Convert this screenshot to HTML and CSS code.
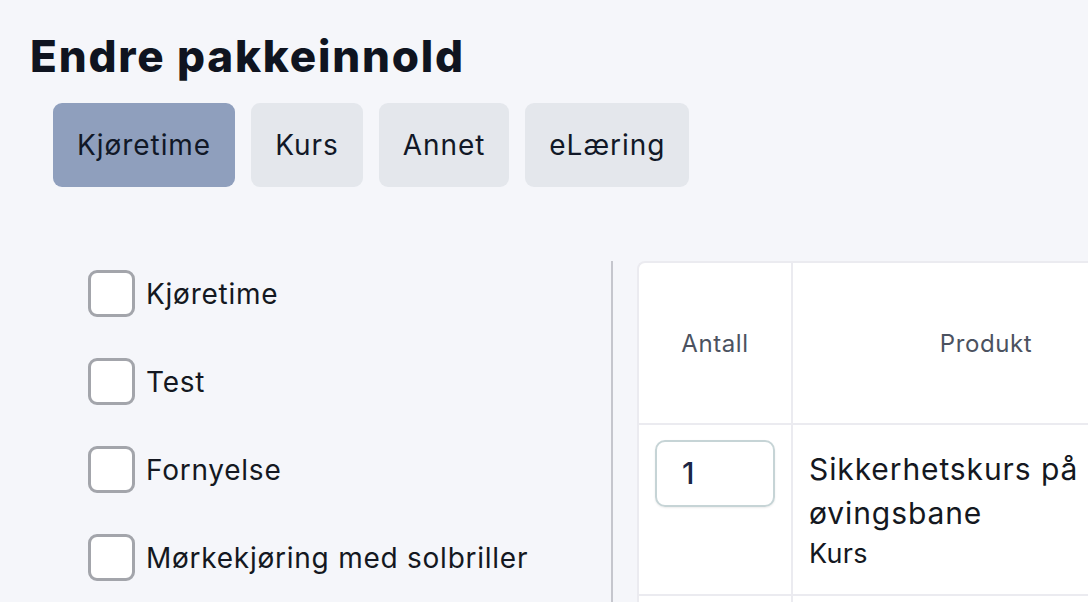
FILE: index.html
```html
<!DOCTYPE html>
<html lang="no">
<head>
<meta charset="utf-8">
<title>Endre pakkeinnold</title>
<link rel="stylesheet" href="styles.css">
</head>
<body>
<main class="page">
  <h1 class="title">Endre pakkeinnold</h1>
  <nav class="tabs">
    <button class="tab active">Kjøretime</button>
    <button class="tab">Kurs</button>
    <button class="tab">Annet</button>
    <button class="tab">eLæring</button>
  </nav>
  <section class="content">
    <div class="options">
      <label class="option"><span class="box"></span><span>Kjøretime</span></label>
      <label class="option"><span class="box"></span><span>Test</span></label>
      <label class="option"><span class="box"></span><span>Fornyelse</span></label>
      <label class="option"><span class="box"></span><span>Mørkekjøring med solbriller</span></label>
    </div>
    <div class="divider"></div>
    <div class="table-wrap">
      <table class="items">
        <thead>
          <tr><th class="col-qty">Antall</th><th class="col-prod">Produkt</th></tr>
        </thead>
        <tbody>
          <tr>
            <td class="qty-cell"><div class="qty">1</div></td>
            <td class="prod-cell"><div class="prod-name">Sikkerhetskurs på øvingsbane</div><div class="prod-type">Kurs</div></td>
          </tr>
          <tr><td class="qty-cell"></td><td class="prod-cell"></td></tr>
        </tbody>
      </table>
    </div>
  </section>
</main>
</body>
</html>
```

FILE: styles.css
```css
* { box-sizing: border-box; }
html, body { margin: 0; padding: 0; }
body {
  background: #f5f6fa;
  font-family: Inter, "Noto Sans", sans-serif;
  color: #111827;
  overflow: hidden;
  width: 1088px;
  height: 602px;
}
.page { padding: 25px 0 0 30px; height: 602px; overflow: hidden; }
.title {
  margin: 0;
  font-size: 44px;
  font-weight: 800;
  line-height: 62px;
  color: #0f1420;
  letter-spacing: 1.8px;
}
.tabs {
  display: flex;
  gap: 16px;
  margin: 16px 0 0 23px;
}
.tab {
  border: 0;
  height: 84px;
  padding: 0 24px;
  border-radius: 9px;
  background: #e4e7ec;
  font-family: inherit;
  font-size: 28px;
  letter-spacing: 0.95px;
  color: #111827;
}
.tab.active { background: #8f9fbd; }
.content {
  display: flex;
  margin-top: 74px;
}
.options {
  width: 581px;
  padding: 9px 0 0 58px;
  display: flex;
  flex-direction: column;
  gap: 41px;
}
.option {
  display: flex;
  align-items: center;
  gap: 11px;
  font-size: 28px;
  letter-spacing: 0.75px;
  color: #141821;
  height: 47px;
}
.box {
  width: 47px;
  height: 47px;
  border: 3px solid #a3a5ab;
  border-radius: 9px;
  background: #fff;
  flex: none;
}
.divider {
  width: 2px;
  background: #c5c6cd;
  height: 400px;
}
.table-wrap {
  margin-left: 24px;
  background: #fff;
  border: 2px solid #ebebf0;
  border-right: 0;
  border-radius: 8px 0 0 0;
  flex: 1;
  overflow: hidden;
}
.items {
  border-collapse: collapse;
  width: 540px;
}
.items th {
  height: 161px;
  font-weight: 400;
  font-size: 24px;
  letter-spacing: 0.6px;
  color: #4b5260;
  text-align: center;
  border-bottom: 2px solid #ebebf0;
}
.col-prod { letter-spacing: 1px; }
.col-qty { width: 153px; border-right: 2px solid #ebebf0; }
.items td { vertical-align: top; border-bottom: 2px solid #ebebf0; }
.qty-cell { border-right: 2px solid #ebebf0; padding: 15px 16px 0 16px; }
.qty {
  width: 120px;
  height: 67px;
  border: 2px solid #c6d4d6;
  border-radius: 10px;
  box-shadow: 0 1px 2px rgba(0,0,0,0.08);
  font-size: 30px;
  font-weight: 500;
  color: #1b2645;
  padding-left: 25px;
  line-height: 63px;
}
.prod-cell { padding: 22px 0 22px 16px; }
.prod-name { font-size: 30px; letter-spacing: 0.9px; line-height: 44px; color: #141821; width: 280px; }
.prod-type { font-size: 27px; letter-spacing: 0.3px; line-height: 37px; color: #141821; }
```
